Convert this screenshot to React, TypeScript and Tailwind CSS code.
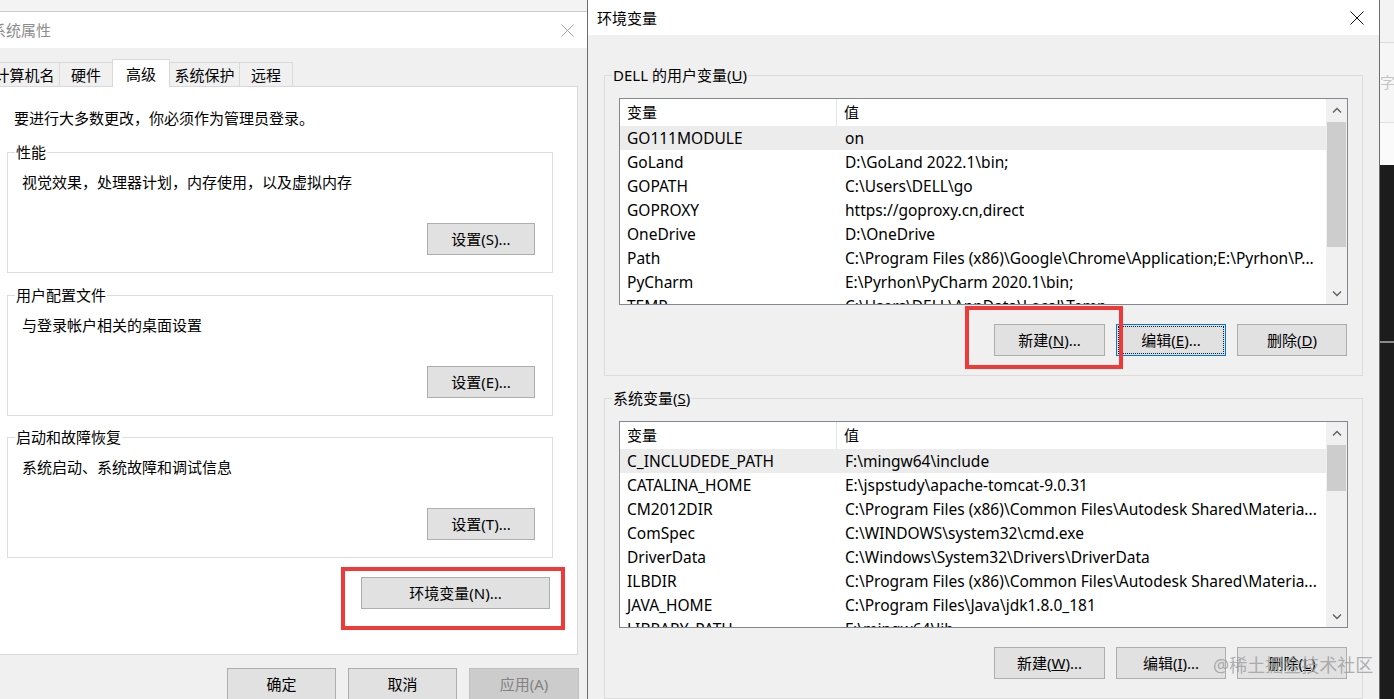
import React from "react";

const F = "font-['Noto_Sans','Noto_Sans_CJK_SC',sans-serif]";

const userVars: [string, string][] = [
  ["GO111MODULE", "on"],
  ["GoLand", "D:\\GoLand 2022.1\\bin;"],
  ["GOPATH", "C:\\Users\\DELL\\go"],
  ["GOPROXY", "https://goproxy.cn,direct"],
  ["OneDrive", "D:\\OneDrive"],
  ["Path", "C:\\Program Files (x86)\\Google\\Chrome\\Application;E:\\Pyrhon\\P..."],
  ["PyCharm", "E:\\Pyrhon\\PyCharm 2020.1\\bin;"],
  ["TEMP", "C:\\Users\\DELL\\AppData\\Local\\Temp"],
];

const sysVars: [string, string][] = [
  ["C_INCLUDEDE_PATH", "F:\\mingw64\\include"],
  ["CATALINA_HOME", "E:\\jspstudy\\apache-tomcat-9.0.31"],
  ["CM2012DIR", "C:\\Program Files (x86)\\Common Files\\Autodesk Shared\\Materia..."],
  ["ComSpec", "C:\\WINDOWS\\system32\\cmd.exe"],
  ["DriverData", "C:\\Windows\\System32\\Drivers\\DriverData"],
  ["ILBDIR", "C:\\Program Files (x86)\\Common Files\\Autodesk Shared\\Materia..."],
  ["JAVA_HOME", "C:\\Program Files\\Java\\jdk1.8.0_181"],
  ["LIBRARY_PATH", "F:\\mingw64\\lib"],
];

function CloseX({ color, size }: { color: string; size: number }) {
  return (
    <svg width={size} height={size} viewBox="0 0 14 14">
      <path d="M0.5 0.5 L13.5 13.5 M13.5 0.5 L0.5 13.5" stroke={color} strokeWidth="1" fill="none" />
    </svg>
  );
}

function Chevron({ up }: { up?: boolean }) {
  return (
    <svg width="10" height="6" viewBox="0 0 10 6">
      <path d={up ? "M1 5.5 L5 1.5 L9 5.5" : "M1 0.5 L5 4.5 L9 0.5"} stroke="#606060" strokeWidth="1.4" fill="none" />
    </svg>
  );
}

function Btn({
  children,
  w,
  disabled,
  focused,
}: {
  children: React.ReactNode;
  w: string;
  disabled?: boolean;
  focused?: boolean;
}) {
  return (
    <div
      className={`relative h-[32px] ${w} flex items-center justify-center text-[15px] leading-[20px] border ${
        disabled
          ? "bg-[#cccccc] border-[#bfbfbf] text-[#838383]"
          : focused
          ? "bg-[#e1e1e1] border-[#0078d7] text-black"
          : "bg-[#e1e1e1] border-[#adadad] text-black"
      }`}
    >
      {focused && <div className="absolute inset-[1px] border border-dotted border-[#1a1a1a]" />}
      <span>{children}</span>
    </div>
  );
}

function LeftGroup({ title, desc, btn }: { title: string; desc: string; btn: React.ReactNode }) {
  return (
    <div className="relative w-[546px] h-[121px] border border-[#dcdcdc] flex flex-col pl-[14px] pr-[17px] pt-[19px]">
      <span className="absolute -top-[11px] left-[7px] bg-white px-[1px] text-[15px] leading-[20px]">{title}</span>
      <div className="text-[15px] leading-[20px]">{desc}</div>
      <div className="self-end mt-[31px]">{btn}</div>
    </div>
  );
}

function VarList({ rows, thumbTop, thumbH }: { rows: [string, string][]; thumbTop: number; thumbH: number }) {
  return (
    <div className="h-[207px] border border-[#828790] bg-white flex overflow-hidden">
      <div className="flex-1 flex flex-col overflow-hidden">
        <div className="h-[27px] shrink-0 flex items-stretch text-[15px]">
          <div className="w-[217px] shrink-0 pl-[7px] flex items-center border-r border-[#e5e5e5]">变量</div>
          <div className="pl-[7px] flex items-center">值</div>
        </div>
        {rows.map(([k, v], i) => (
          <div
            key={k}
            className={`h-[24px] shrink-0 pt-[2px] flex items-center text-[15.5px] whitespace-nowrap ${
              i === 0 ? "bg-[#ececec]" : ""
            }`}
          >
            <div className="w-[217px] shrink-0 pl-[7px]">{k}</div>
            <div className="pl-[8px] overflow-hidden">{v}</div>
          </div>
        ))}
      </div>
      <div className="w-[21px] shrink-0 bg-[#f0f0f0] flex flex-col">
        <div className="h-[21px] shrink-0 flex items-center justify-center">
          <Chevron up />
        </div>
        <div className="flex-1 relative px-[1px]">
          <div className="bg-[#cdcdcd] w-full" style={{ marginTop: thumbTop, height: thumbH }} />
        </div>
        <div className="h-[21px] shrink-0 flex items-center justify-center">
          <Chevron />
        </div>
      </div>
    </div>
  );
}

function RightGroup({
  title,
  rows,
  thumbTop,
  thumbH,
  buttons,
  className,
}: {
  title: React.ReactNode;
  rows: [string, string][];
  thumbTop: number;
  thumbH: number;
  buttons: React.ReactNode;
  className: string;
}) {
  return (
    <div className={`relative border border-[#dcdcdc] px-[14px] pt-[22px] pb-[19px] ${className}`}>
      <span className="absolute -top-[11px] left-[7px] bg-[#f0f0f0] px-[1px] text-[15px] leading-[20px]">{title}</span>
      <VarList rows={rows} thumbTop={thumbTop} thumbH={thumbH} />
      <div className="mt-[19px] flex justify-end gap-[11px] pr-[1px]">{buttons}</div>
    </div>
  );
}

export default function App() {
  return (
    <div className={`relative w-[1394px] h-[699px] overflow-hidden bg-[#f2f2f2] flex text-black ${F}`}>
      {/* Left window: 系统属性 */}
      <div className="w-[587px] shrink-0 flex flex-col">
        <div className="h-[12px] shrink-0 bg-[#f3f3f3] border-b border-[#cfcfcf]" />
        <div className="h-[36px] shrink-0 bg-white flex items-center justify-between pr-[13px]">
          <span className="-ml-[9px] text-[15px] leading-[20px] text-[#8c8c8c]">系统属性</span>
          <CloseX color="#9a9a9a" size={13} />
        </div>
        <div className="flex-1 bg-[#f0f0f0] flex flex-col">
          <div className="mt-[11px] h-[27px] flex items-end text-[15px] leading-[20px]">
            <div className="-ml-[10px] w-[70px] h-[24px] border-t border-r border-[#d9d9d9] flex items-center justify-center">
              计算机名
            </div>
            <div className="w-[53px] h-[24px] border-t border-r border-[#d9d9d9] flex items-center justify-center">
              硬件
            </div>
            <div className="relative z-10 -mb-px -ml-px w-[58px] h-[28px] bg-white border-t border-x border-[#d9d9d9] flex items-center justify-center">
              高级
            </div>
            <div className="w-[70px] h-[24px] border-t border-r border-[#d9d9d9] flex items-center justify-center">
              系统保护
            </div>
            <div className="w-[53px] h-[24px] border-t border-r border-[#d9d9d9] flex items-center justify-center">
              远程
            </div>
          </div>
          <div className="-ml-px w-[579px] h-[569px] shrink-0 bg-white border border-[#d9d9d9] flex flex-col pl-[7px]">
            <div className="mt-[21px] ml-[7px] text-[15px] leading-[20px]">要进行大多数更改，你必须作为管理员登录。</div>
            <div className="mt-[24px]">
              <LeftGroup
                title="性能"
                desc="视觉效果，处理器计划，内存使用，以及虚拟内存"
                btn={<Btn w="w-[108px]">设置(S)...</Btn>}
              />
            </div>
            <div className="mt-[22px]">
              <LeftGroup title="用户配置文件" desc="与登录帐户相关的桌面设置" btn={<Btn w="w-[108px]">设置(E)...</Btn>} />
            </div>
            <div className="mt-[21px]">
              <LeftGroup
                title="启动和故障恢复"
                desc="系统启动、系统故障和调试信息"
                btn={<Btn w="w-[108px]">设置(T)...</Btn>}
              />
            </div>
            <div className="mt-[19px] self-end mr-[27px] relative">
              <Btn w="w-[189px]">环境变量(N)...</Btn>
              <div className="absolute -left-[20px] -right-[15px] -top-[10px] -bottom-[21px] border-[4px] border-[#f03a3a]" />
            </div>
          </div>
          <div className="mt-[13px] flex justify-end gap-[12px] pr-[8px]">
            <Btn w="w-[109px]">确定</Btn>
            <Btn w="w-[109px]">取消</Btn>
            <Btn w="w-[110px]" disabled>
              应用(A)
            </Btn>
          </div>
        </div>
      </div>

      {/* Right window: 环境变量 */}
      <div className="w-[793px] shrink-0 h-full flex flex-col border-x border-[#6e6e6e] bg-[#f0f0f0]">
        <div className="h-[35px] shrink-0 bg-white flex items-center justify-between pl-[9px] pr-[15px]">
          <span className="text-[15px] leading-[20px]">环境变量</span>
          <CloseX color="#111" size={14} />
        </div>
        <div className="flex-1 px-[16px] flex flex-col">
          <RightGroup
            className="mt-[40px]"
            title={
              <>
                DELL 的用户变量(<u>U</u>)
              </>
            }
            rows={userVars}
            thumbTop={2}
            thumbH={125}
            buttons={
              <>
                <div className="relative">
                  <Btn w="w-[111px]">
                    新建(<u>N</u>)...
                  </Btn>
                  <div className="absolute z-10 -left-[29px] -right-[18px] -top-[18px] -bottom-[13px] border-[4px] border-[#f03a3a]" />
                </div>
                <Btn w="w-[110px]" focused>
                  编辑(<u>E</u>)...
                </Btn>
                <Btn w="w-[110px]">
                  删除(<u>D</u>)
                </Btn>
              </>
            }
          />
          <RightGroup
            className="mt-[22px]"
            title={
              <>
                系统变量(<u>S</u>)
              </>
            }
            rows={sysVars}
            thumbTop={2}
            thumbH={46}
            buttons={
              <>
                <Btn w="w-[111px]">
                  新建(<u>W</u>)...
                </Btn>
                <Btn w="w-[110px]">
                  编辑(<u>I</u>)...
                </Btn>
                <Btn w="w-[110px]">
                  删除(<u>L</u>)
                </Btn>
              </>
            }
          />
        </div>
      </div>

      {/* Right edge strip */}
      <div className="flex-1 flex flex-col">
        <div className="h-[43px] bg-[#f3f3f3] border-b border-[#dcdcdc]" />
        <div className="h-[80px] bg-[#f6f6f6] border-b border-[#e0e0e0] flex items-center text-[15px] text-[#c4c4c4]">
          字
        </div>
        <div className="h-[42px] bg-[#fafafa]" />
        <div className="flex-1 bg-[#1c1c1c] flex flex-col">
          <div className="h-[176px]" />
          <div className="h-[2px] bg-[#8a8a8a]" />
        </div>
      </div>

      {/* Watermark */}
      <div className="absolute left-[1213px] top-[653px] text-[18px] leading-[24px] text-[#9c9c9c]/80 whitespace-nowrap">
        @稀土掘金技术社区
      </div>
    </div>
  );
}
